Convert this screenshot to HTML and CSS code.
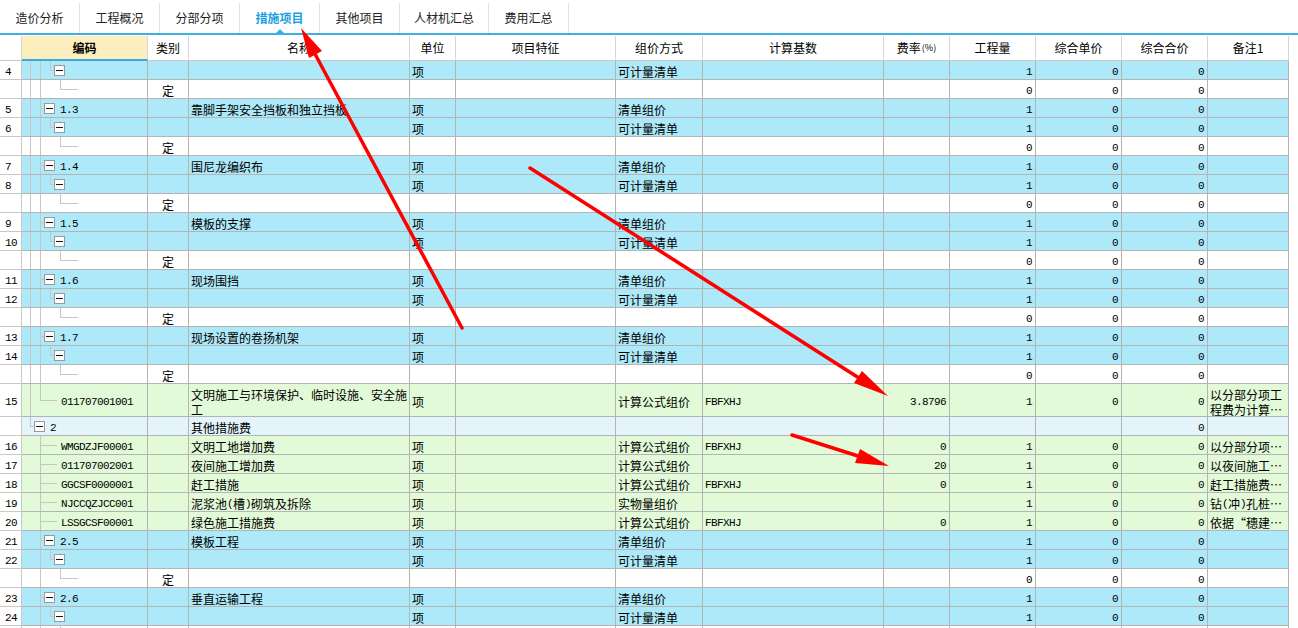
FILE: index.html
```html
<!DOCTYPE html>
<html lang="zh">
<head>
<meta charset="utf-8">
<title>措施项目</title>
<link rel="stylesheet" href="styles.css">
</head>
<body>
<div class="tabs">
  <div class="tab">造价分析</div>
  <div class="tab">工程概况</div>
  <div class="tab">分部分项</div>
  <div class="tab on">措施项目</div>
  <div class="tab">其他项目</div>
  <div class="tab">人材机汇总</div>
  <div class="tab">费用汇总</div>
</div>

<div class="grid">
  <div class="row hd">
    <div class="cell rn"></div>
    <div class="cell hcode">编码</div>
    <div class="cell">类别</div>
    <div class="cell">名称</div>
    <div class="cell">单位</div>
    <div class="cell">项目特征</div>
    <div class="cell">组价方式</div>
    <div class="cell">计算基数</div>
    <div class="cell">费率<small>(%)</small></div>
    <div class="cell">工程量</div>
    <div class="cell">综合单价</div>
    <div class="cell">综合合价</div>
    <div class="cell">备注1</div>
  </div>

  <!-- 4 -->
  <div class="row blue">
    <div class="cell rn">4</div>
    <div class="cell code"><i class="g"></i><i class="g"></i><i class="k l"></i><i class="bx"></i></div>
    <div class="cell"></div><div class="cell"></div><div class="cell">项</div><div class="cell"></div>
    <div class="cell">可计量清单</div><div class="cell"></div><div class="cell num"></div>
    <div class="cell num">1</div><div class="cell num">0</div><div class="cell num">0</div><div class="cell"></div>
  </div>
  <div class="row">
    <div class="cell rn"></div>
    <div class="cell code"><i class="g"></i><i class="g"></i><i class="e"></i><i class="k l x"></i></div>
    <div class="cell ctr">定</div><div class="cell"></div><div class="cell"></div><div class="cell"></div>
    <div class="cell"></div><div class="cell"></div><div class="cell num"></div>
    <div class="cell num">0</div><div class="cell num">0</div><div class="cell num">0</div><div class="cell"></div>
  </div>

  <!-- 1.3 -->
  <div class="row blue">
    <div class="cell rn">5</div>
    <div class="cell code"><i class="g"></i><i class="k"></i><i class="bx"></i><span class="t">1.3</span></div>
    <div class="cell"></div><div class="cell">靠脚手架安全挡板和独立挡板</div><div class="cell">项</div><div class="cell"></div>
    <div class="cell">清单组价</div><div class="cell"></div><div class="cell num"></div>
    <div class="cell num">1</div><div class="cell num">0</div><div class="cell num">0</div><div class="cell"></div>
  </div>
  <div class="row blue">
    <div class="cell rn">6</div>
    <div class="cell code"><i class="g"></i><i class="g"></i><i class="k l"></i><i class="bx"></i></div>
    <div class="cell"></div><div class="cell"></div><div class="cell">项</div><div class="cell"></div>
    <div class="cell">可计量清单</div><div class="cell"></div><div class="cell num"></div>
    <div class="cell num">1</div><div class="cell num">0</div><div class="cell num">0</div><div class="cell"></div>
  </div>
  <div class="row">
    <div class="cell rn"></div>
    <div class="cell code"><i class="g"></i><i class="g"></i><i class="e"></i><i class="k l x"></i></div>
    <div class="cell ctr">定</div><div class="cell"></div><div class="cell"></div><div class="cell"></div>
    <div class="cell"></div><div class="cell"></div><div class="cell num"></div>
    <div class="cell num">0</div><div class="cell num">0</div><div class="cell num">0</div><div class="cell"></div>
  </div>

  <!-- 1.4 -->
  <div class="row blue">
    <div class="cell rn">7</div>
    <div class="cell code"><i class="g"></i><i class="k"></i><i class="bx"></i><span class="t">1.4</span></div>
    <div class="cell"></div><div class="cell">围尼龙编织布</div><div class="cell">项</div><div class="cell"></div>
    <div class="cell">清单组价</div><div class="cell"></div><div class="cell num"></div>
    <div class="cell num">1</div><div class="cell num">0</div><div class="cell num">0</div><div class="cell"></div>
  </div>
  <div class="row blue">
    <div class="cell rn">8</div>
    <div class="cell code"><i class="g"></i><i class="g"></i><i class="k l"></i><i class="bx"></i></div>
    <div class="cell"></div><div class="cell"></div><div class="cell">项</div><div class="cell"></div>
    <div class="cell">可计量清单</div><div class="cell"></div><div class="cell num"></div>
    <div class="cell num">1</div><div class="cell num">0</div><div class="cell num">0</div><div class="cell"></div>
  </div>
  <div class="row">
    <div class="cell rn"></div>
    <div class="cell code"><i class="g"></i><i class="g"></i><i class="e"></i><i class="k l x"></i></div>
    <div class="cell ctr">定</div><div class="cell"></div><div class="cell"></div><div class="cell"></div>
    <div class="cell"></div><div class="cell"></div><div class="cell num"></div>
    <div class="cell num">0</div><div class="cell num">0</div><div class="cell num">0</div><div class="cell"></div>
  </div>

  <!-- 1.5 -->
  <div class="row blue">
    <div class="cell rn">9</div>
    <div class="cell code"><i class="g"></i><i class="k"></i><i class="bx"></i><span class="t">1.5</span></div>
    <div class="cell"></div><div class="cell">模板的支撑</div><div class="cell">项</div><div class="cell"></div>
    <div class="cell">清单组价</div><div class="cell"></div><div class="cell num"></div>
    <div class="cell num">1</div><div class="cell num">0</div><div class="cell num">0</div><div class="cell"></div>
  </div>
  <div class="row blue">
    <div class="cell rn">10</div>
    <div class="cell code"><i class="g"></i><i class="g"></i><i class="k l"></i><i class="bx"></i></div>
    <div class="cell"></div><div class="cell"></div><div class="cell">项</div><div class="cell"></div>
    <div class="cell">可计量清单</div><div class="cell"></div><div class="cell num"></div>
    <div class="cell num">1</div><div class="cell num">0</div><div class="cell num">0</div><div class="cell"></div>
  </div>
  <div class="row">
    <div class="cell rn"></div>
    <div class="cell code"><i class="g"></i><i class="g"></i><i class="e"></i><i class="k l x"></i></div>
    <div class="cell ctr">定</div><div class="cell"></div><div class="cell"></div><div class="cell"></div>
    <div class="cell"></div><div class="cell"></div><div class="cell num"></div>
    <div class="cell num">0</div><div class="cell num">0</div><div class="cell num">0</div><div class="cell"></div>
  </div>

  <!-- 1.6 -->
  <div class="row blue">
    <div class="cell rn">11</div>
    <div class="cell code"><i class="g"></i><i class="k"></i><i class="bx"></i><span class="t">1.6</span></div>
    <div class="cell"></div><div class="cell">现场围挡</div><div class="cell">项</div><div class="cell"></div>
    <div class="cell">清单组价</div><div class="cell"></div><div class="cell num"></div>
    <div class="cell num">1</div><div class="cell num">0</div><div class="cell num">0</div><div class="cell"></div>
  </div>
  <div class="row blue">
    <div class="cell rn">12</div>
    <div class="cell code"><i class="g"></i><i class="g"></i><i class="k l"></i><i class="bx"></i></div>
    <div class="cell"></div><div class="cell"></div><div class="cell">项</div><div class="cell"></div>
    <div class="cell">可计量清单</div><div class="cell"></div><div class="cell num"></div>
    <div class="cell num">1</div><div class="cell num">0</div><div class="cell num">0</div><div class="cell"></div>
  </div>
  <div class="row">
    <div class="cell rn"></div>
    <div class="cell code"><i class="g"></i><i class="g"></i><i class="e"></i><i class="k l x"></i></div>
    <div class="cell ctr">定</div><div class="cell"></div><div class="cell"></div><div class="cell"></div>
    <div class="cell"></div><div class="cell"></div><div class="cell num"></div>
    <div class="cell num">0</div><div class="cell num">0</div><div class="cell num">0</div><div class="cell"></div>
  </div>

  <!-- 1.7 -->
  <div class="row blue">
    <div class="cell rn">13</div>
    <div class="cell code"><i class="g"></i><i class="k"></i><i class="bx"></i><span class="t">1.7</span></div>
    <div class="cell"></div><div class="cell">现场设置的卷扬机架</div><div class="cell">项</div><div class="cell"></div>
    <div class="cell">清单组价</div><div class="cell"></div><div class="cell num"></div>
    <div class="cell num">1</div><div class="cell num">0</div><div class="cell num">0</div><div class="cell"></div>
  </div>
  <div class="row blue">
    <div class="cell rn">14</div>
    <div class="cell code"><i class="g"></i><i class="g"></i><i class="k l"></i><i class="bx"></i></div>
    <div class="cell"></div><div class="cell"></div><div class="cell">项</div><div class="cell"></div>
    <div class="cell">可计量清单</div><div class="cell"></div><div class="cell num"></div>
    <div class="cell num">1</div><div class="cell num">0</div><div class="cell num">0</div><div class="cell"></div>
  </div>
  <div class="row">
    <div class="cell rn"></div>
    <div class="cell code"><i class="g"></i><i class="g"></i><i class="e"></i><i class="k l x"></i></div>
    <div class="cell ctr">定</div><div class="cell"></div><div class="cell"></div><div class="cell"></div>
    <div class="cell"></div><div class="cell"></div><div class="cell num"></div>
    <div class="cell num">0</div><div class="cell num">0</div><div class="cell num">0</div><div class="cell"></div>
  </div>

  <!-- 15 -->
  <div class="row green tall">
    <div class="cell rn">15</div>
    <div class="cell code"><i class="g"></i><i class="k l w"></i><span class="t m">011707001001</span></div>
    <div class="cell"></div>
    <div class="cell wrap"><span>文明施工与环境保护、临时设施、安全施工</span></div>
    <div class="cell">项</div><div class="cell"></div>
    <div class="cell">计算公式组价</div><div class="cell m">FBFXHJ</div><div class="cell num">3.8796</div>
    <div class="cell num">1</div><div class="cell num">0</div><div class="cell num">0</div>
    <div class="cell wrap"><span>以分部分项工<br>程费为计算…</span></div>
  </div>

  <!-- 2 -->
  <div class="row pale">
    <div class="cell rn"></div>
    <div class="cell code"><i class="k l"></i><i class="bx"></i><span class="t">2</span></div>
    <div class="cell"></div><div class="cell">其他措施费</div><div class="cell"></div><div class="cell"></div>
    <div class="cell"></div><div class="cell"></div><div class="cell num"></div>
    <div class="cell num"></div><div class="cell num"></div><div class="cell num">0</div><div class="cell"></div>
  </div>

  <div class="row green">
    <div class="cell rn">16</div>
    <div class="cell code"><i class="e"></i><i class="k w"></i><span class="t m">WMGDZJF00001</span></div>
    <div class="cell"></div><div class="cell">文明工地增加费</div><div class="cell">项</div><div class="cell"></div>
    <div class="cell">计算公式组价</div><div class="cell m">FBFXHJ</div><div class="cell num">0</div>
    <div class="cell num">1</div><div class="cell num">0</div><div class="cell num">0</div><div class="cell">以分部分项…</div>
  </div>
  <div class="row green">
    <div class="cell rn">17</div>
    <div class="cell code"><i class="e"></i><i class="k w"></i><span class="t m">011707002001</span></div>
    <div class="cell"></div><div class="cell">夜间施工增加费</div><div class="cell">项</div><div class="cell"></div>
    <div class="cell">计算公式组价</div><div class="cell m"></div><div class="cell num">20</div>
    <div class="cell num">1</div><div class="cell num">0</div><div class="cell num">0</div><div class="cell">以夜间施工…</div>
  </div>
  <div class="row green">
    <div class="cell rn">18</div>
    <div class="cell code"><i class="e"></i><i class="k w"></i><span class="t m">GGCSF0000001</span></div>
    <div class="cell"></div><div class="cell">赶工措施</div><div class="cell">项</div><div class="cell"></div>
    <div class="cell">计算公式组价</div><div class="cell m">FBFXHJ</div><div class="cell num">0</div>
    <div class="cell num">1</div><div class="cell num">0</div><div class="cell num">0</div><div class="cell">赶工措施费…</div>
  </div>
  <div class="row green">
    <div class="cell rn">19</div>
    <div class="cell code"><i class="e"></i><i class="k w"></i><span class="t m">NJCCQZJCC001</span></div>
    <div class="cell"></div><div class="cell">泥浆池<span class="p">(</span>槽<span class="p">)</span>砌筑及拆除</div><div class="cell">项</div><div class="cell"></div>
    <div class="cell">实物量组价</div><div class="cell m"></div><div class="cell num"></div>
    <div class="cell num">1</div><div class="cell num">0</div><div class="cell num">0</div><div class="cell">钻<span class="p">(</span>冲<span class="p">)</span>孔桩…</div>
  </div>
  <div class="row green">
    <div class="cell rn">20</div>
    <div class="cell code"><i class="e"></i><i class="k w"></i><span class="t m">LSSGCSF00001</span></div>
    <div class="cell"></div><div class="cell">绿色施工措施费</div><div class="cell">项</div><div class="cell"></div>
    <div class="cell">计算公式组价</div><div class="cell m">FBFXHJ</div><div class="cell num">0</div>
    <div class="cell num">1</div><div class="cell num">0</div><div class="cell num">0</div><div class="cell">依据“穗建…</div>
  </div>

  <!-- 2.5 -->
  <div class="row blue">
    <div class="cell rn">21</div>
    <div class="cell code"><i class="e"></i><i class="k"></i><i class="bx"></i><span class="t">2.5</span></div>
    <div class="cell"></div><div class="cell">模板工程</div><div class="cell">项</div><div class="cell"></div>
    <div class="cell">清单组价</div><div class="cell"></div><div class="cell num"></div>
    <div class="cell num">1</div><div class="cell num">0</div><div class="cell num">0</div><div class="cell"></div>
  </div>
  <div class="row blue">
    <div class="cell rn">22</div>
    <div class="cell code"><i class="e"></i><i class="g"></i><i class="k l"></i><i class="bx"></i></div>
    <div class="cell"></div><div class="cell"></div><div class="cell">项</div><div class="cell"></div>
    <div class="cell">可计量清单</div><div class="cell"></div><div class="cell num"></div>
    <div class="cell num">1</div><div class="cell num">0</div><div class="cell num">0</div><div class="cell"></div>
  </div>
  <div class="row">
    <div class="cell rn"></div>
    <div class="cell code"><i class="e"></i><i class="g"></i><i class="e"></i><i class="k l x"></i></div>
    <div class="cell ctr">定</div><div class="cell"></div><div class="cell"></div><div class="cell"></div>
    <div class="cell"></div><div class="cell"></div><div class="cell num"></div>
    <div class="cell num">0</div><div class="cell num">0</div><div class="cell num">0</div><div class="cell"></div>
  </div>

  <!-- 2.6 -->
  <div class="row blue">
    <div class="cell rn">23</div>
    <div class="cell code"><i class="e"></i><i class="k"></i><i class="bx"></i><span class="t">2.6</span></div>
    <div class="cell"></div><div class="cell">垂直运输工程</div><div class="cell">项</div><div class="cell"></div>
    <div class="cell">清单组价</div><div class="cell"></div><div class="cell num"></div>
    <div class="cell num">1</div><div class="cell num">0</div><div class="cell num">0</div><div class="cell"></div>
  </div>
  <div class="row blue">
    <div class="cell rn">24</div>
    <div class="cell code"><i class="e"></i><i class="g"></i><i class="k l"></i><i class="bx"></i></div>
    <div class="cell"></div><div class="cell"></div><div class="cell">项</div><div class="cell"></div>
    <div class="cell">可计量清单</div><div class="cell"></div><div class="cell num"></div>
    <div class="cell num">1</div><div class="cell num">0</div><div class="cell num">0</div><div class="cell"></div>
  </div>
  <div class="row">
    <div class="cell rn"></div>
    <div class="cell code"><i class="e"></i><i class="g"></i><i class="e"></i><i class="k l x"></i></div>
    <div class="cell"></div><div class="cell"></div><div class="cell"></div><div class="cell"></div>
    <div class="cell"></div><div class="cell"></div><div class="cell num"></div>
    <div class="cell num"></div><div class="cell num"></div><div class="cell num"></div><div class="cell"></div>
  </div>
</div>

<svg class="ann" width="1298" height="628" viewBox="0 0 1298 628" aria-hidden="true">
  <g stroke="#ff0000" stroke-width="3.5" stroke-linecap="round" fill="none">
    <line x1="462" y1="328" x2="315" y2="54"/>
    <line x1="530" y1="168" x2="859" y2="378"/>
    <line x1="792" y1="435" x2="858" y2="456"/>
  </g>
  <g fill="#ff0000">
    <polygon points="301,28 322,51 309,58"/>
    <polygon points="888,396 854,383 862,371"/>
    <polygon points="889,466 855,463 860,449"/>
  </g>
</svg>
</body>
</html>
```

FILE: styles.css
```css
* { box-sizing: border-box; }

html, body {
  margin: 0;
  background: #ffffff;
}

body {
  position: relative;
  width: 1298px;
  height: 628px;
  overflow: hidden;
  font-family: "Noto Sans CJK SC", "Liberation Sans", sans-serif;
  font-size: 12px;
  color: #000;
}

/* ---------- tabs ---------- */
.tabs {
  display: flex;
  height: 35px;
  padding-top: 3px;
  border-bottom: 2px solid #3db0e2;
}

.tab {
  position: relative;
  min-width: 80px;
  padding: 0 14px 1px;
  border-right: 1px solid #e3e3e3;
  display: flex;
  align-items: center;
  justify-content: center;
  color: #222;
  font-size: 12px;
}

.tab.on {
  color: #1b9fe0;
  font-weight: bold;
}

.tab.on::after {
  content: "";
  position: absolute;
  left: 50%;
  bottom: 0;
  margin-left: -4px;
  border-left: 4px solid transparent;
  border-right: 4px solid transparent;
  border-bottom: 4px solid #3db0e2;
}

/* ---------- grid ---------- */
.grid {
  margin-top: 1px;
}

.row {
  display: grid;
  grid-template-columns: 22px 126px 41px 221px 46px 160px 87px 181px 66px 86px 86px 86px 81px;
  height: 19px;
}

.row.tall { height: 33px; }

.cell {
  display: flex;
  align-items: center;
  padding: 3px 2px 0;
  border-right: 1px solid #b4b4b4;
  border-bottom: 1px solid #b4b4b4;
  white-space: nowrap;
  overflow: hidden;
  line-height: 18px;
}

.blue .cell { background: #aee9f9; }
.green .cell { background: #e3fad8; }
.pale .cell { background: #e3f5fb; }
.row .cell.rn { background: #fff; }

.rn {
  padding-left: 5px;
  font-family: "Liberation Mono", monospace;
  font-size: 11px;
  letter-spacing: -0.6px;
  border-right-color: #c8c8c8;
  border-bottom-color: #c8c8c8;
}

.num {
  justify-content: flex-end;
  padding-right: 3px;
  font-family: "Liberation Mono", monospace;
  font-size: 11px;
  letter-spacing: -0.6px;
}

.m {
  font-family: "Liberation Mono", monospace;
  font-size: 11px;
  letter-spacing: -0.6px;
}

.ctr { justify-content: center; }

.p {
  font-family: "Liberation Mono", monospace;
  font-size: 11px;
  letter-spacing: -0.6px;
}

.wrap {
  white-space: normal;
  line-height: 15px;
  align-items: center;
}

.wrap span { display: block; }

/* header */
.hd { height: 25px; }

.hd .cell {
  justify-content: center;
  padding-top: 0;
  background: #fff;
  border-right-color: #d6d6d6;
  border-bottom-color: #c8c8c8;
  line-height: 24px;
}

.hd .cell.rn { border-right-color: #d6d6d6; }

.hd .hcode {
  background: #fdefbd;
  font-weight: bold;
  border-bottom: 2px solid #3aa8dc;
}

.hd small { font-size: 9px; margin-left: 1px; }

/* ---------- tree in code column ---------- */
.code {
  padding: 0 0 0 8px;
  align-items: stretch;
}

.code i { display: block; flex: none; }

.g {
  width: 10px;
  border-left: 1px solid #c6c6c6;
}

.e { width: 10px; }

.k {
  width: 4px;
  border-left: 1px solid #c6c6c6;
  background: linear-gradient(#c6c6c6, #c6c6c6) no-repeat 0 9px / 100% 1px;
}

.k.l {
  align-self: flex-start;
  height: 10px;
  border-bottom: 1px solid #c6c6c6;
  background: none;
}

.tall .k.l { height: 17px; }
.tall .k { background-position: 0 16px; }

.k.w { width: 17px; }
.k.x { width: 18px; }

.bx {
  position: relative;
  align-self: center;
  width: 11px;
  height: 11px;
  border: 1px solid #9a9a9a;
  background: #fff;
}

.bx::after {
  content: "";
  position: absolute;
  left: 1px;
  right: 1px;
  top: 4px;
  height: 1px;
  background: #111;
}

.code .t {
  align-self: center;
  margin: 3px 0 0 5px;
  font-family: "Liberation Mono", monospace;
  font-size: 11px;
  letter-spacing: -0.6px;
}

.code .t.m { margin-left: 4px; }

/* ---------- annotation arrows ---------- */
.ann {
  position: absolute;
  left: 0;
  top: 0;
  pointer-events: none;
}
```
